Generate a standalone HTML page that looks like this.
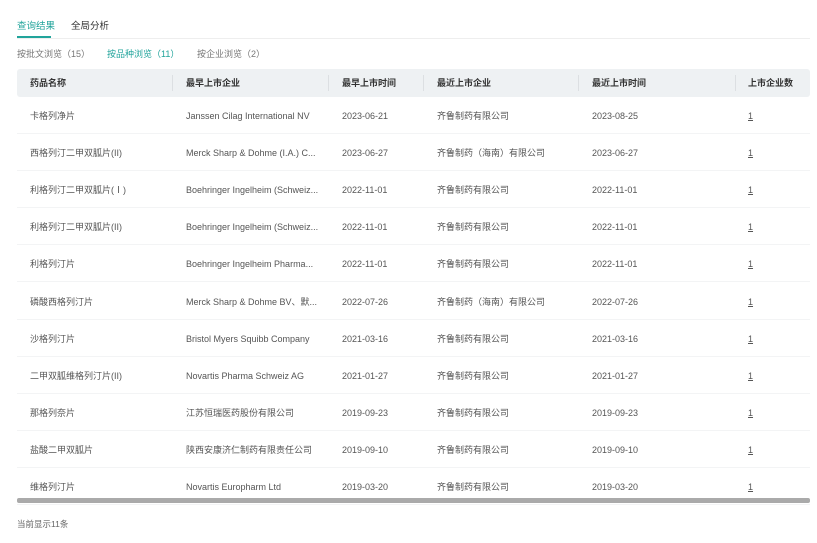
<!DOCTYPE html>
<html><head><meta charset="utf-8"><style>
*{margin:0;padding:0;box-sizing:border-box}
body{width:817px;height:543px;background:#fff;font-family:"Liberation Sans","Noto Sans CJK SC",sans-serif;font-size:9px;color:#555;position:relative;overflow:hidden}
.abs{position:absolute;white-space:nowrap;line-height:12px}
.tabs{left:17px;top:21px;font-size:9.5px}
.line{position:absolute;left:17px;top:38px;width:793px;height:1px;background:#eee}
.ul{position:absolute;left:17px;top:36px;width:34px;height:2px;background:#21a49b}
.hdr{position:absolute;left:17px;top:69px;width:793px;height:28px;background:#eef1f3;border-radius:3px}
.hdr span{position:absolute;top:0;line-height:29px;font-weight:bold;color:#333;white-space:nowrap}
.sep{position:absolute;top:6px;width:1px;height:16px;background:#dcdfe2}
.row{position:absolute;left:17px;width:793px;height:37px;border-bottom:1px solid #f3f4f5}
.row span{position:absolute;top:0;line-height:38px;color:#555;white-space:nowrap}
.u{text-decoration:underline}
.sb{position:absolute;left:17px;top:498px;width:793px;height:5px;background:#aaa;border-radius:2px}
</style></head><body>
<div class="abs tabs" style="color:#21a49b">查询结果</div>
<div class="abs tabs" style="left:71px;color:#333">全局分析</div>
<div class="line"></div><div class="ul"></div>
<div class="abs" style="left:17px;top:48px;color:#777">按批文浏览（15）</div>
<div class="abs" style="left:107px;top:48px;color:#21a49b">按品种浏览（11）</div>
<div class="abs" style="left:197px;top:48px;color:#777">按企业浏览（2）</div>
<div class="hdr">
<span style="left:13px">药品名称</span><div class="sep" style="left:155px"></div>
<span style="left:169px">最早上市企业</span><div class="sep" style="left:311px"></div>
<span style="left:325px">最早上市时间</span><div class="sep" style="left:406px"></div>
<span style="left:420px">最近上市企业</span><div class="sep" style="left:561px"></div>
<span style="left:575px">最近上市时间</span><div class="sep" style="left:718px"></div>
<span style="left:731px">上市企业数</span>
</div>
<div id="rows"></div>
<script>
var d=[["卡格列净片","Janssen Cilag International NV","2023-06-21","齐鲁制药有限公司","2023-08-25"],
["西格列汀二甲双胍片(II)","Merck Sharp &amp; Dohme (I.A.) C...","2023-06-27","齐鲁制药（海南）有限公司","2023-06-27"],
["利格列汀二甲双胍片(Ⅰ)","Boehringer Ingelheim (Schweiz...","2022-11-01","齐鲁制药有限公司","2022-11-01"],
["利格列汀二甲双胍片(II)","Boehringer Ingelheim (Schweiz...","2022-11-01","齐鲁制药有限公司","2022-11-01"],
["利格列汀片","Boehringer Ingelheim Pharma...","2022-11-01","齐鲁制药有限公司","2022-11-01"],
["磷酸西格列汀片","Merck Sharp &amp; Dohme BV、默...","2022-07-26","齐鲁制药（海南）有限公司","2022-07-26"],
["沙格列汀片","Bristol Myers Squibb Company","2021-03-16","齐鲁制药有限公司","2021-03-16"],
["二甲双胍维格列汀片(II)","Novartis Pharma Schweiz AG","2021-01-27","齐鲁制药有限公司","2021-01-27"],
["那格列奈片","江苏恒瑞医药股份有限公司","2019-09-23","齐鲁制药有限公司","2019-09-23"],
["盐酸二甲双胍片","陕西安康济仁制药有限责任公司","2019-09-10","齐鲁制药有限公司","2019-09-10"],
["维格列汀片","Novartis Europharm Ltd","2019-03-20","齐鲁制药有限公司","2019-03-20"]];
var h="";d.forEach(function(r,i){h+='<div class="row" style="top:'+(97+i*37.1)+'px"><span style="left:13px">'+r[0]+'</span><span style="left:169px">'+r[1]+'</span><span style="left:325px">'+r[2]+'</span><span style="left:420px">'+r[3]+'</span><span style="left:575px">'+r[4]+'</span><span class="u" style="left:731px">1</span></div>';});
document.getElementById("rows").innerHTML=h;
</script>
<div class="sb"></div>
<div class="abs" style="left:17px;top:518px;font-size:8.5px;color:#666">当前显示11条</div>
</body></html>
